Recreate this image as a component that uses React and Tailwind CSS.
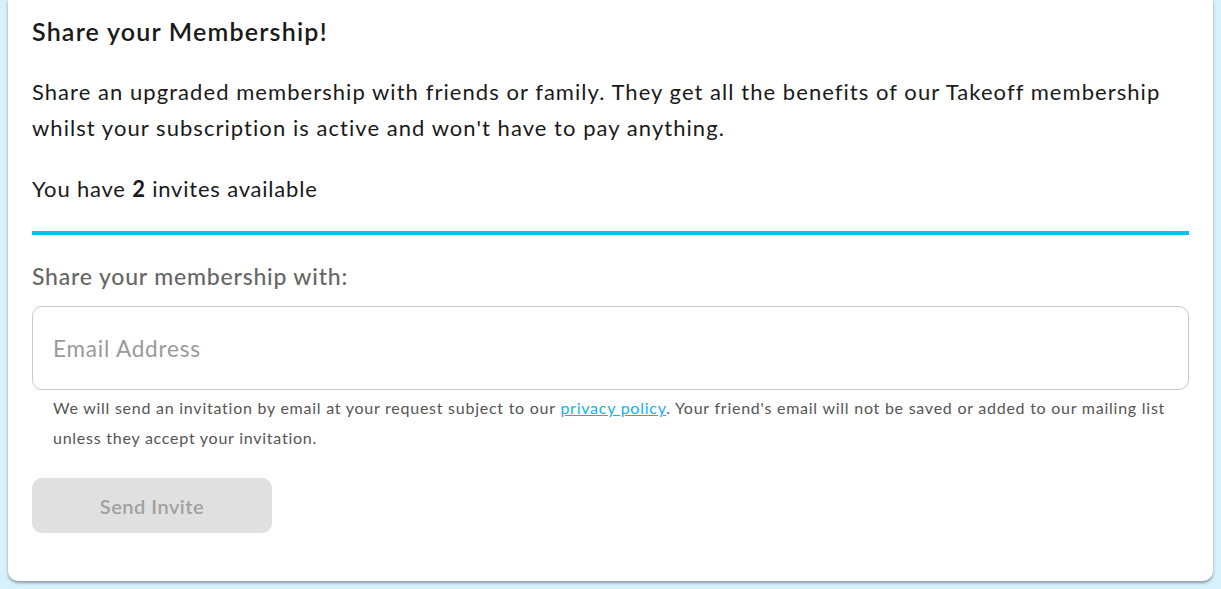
import React from 'react';

const App = () => {
  return (
    <div
      className="min-h-screen bg-[#d6f1fc] px-2 pb-2"
      style={{ fontFamily: 'Lato, "Noto Sans", sans-serif' }}
    >
      <div className="bg-white rounded-b-[10px] shadow-[0_2px_3px_rgba(0,0,0,0.35)] px-6 pt-[14px] pb-12">
        {/* Heading */}
        <h2 className="text-[25px] leading-[34px] font-semibold tracking-[1.2px] text-[#1a1a1a]">
          Share your Membership!
        </h2>

        <p className="mt-[26px] text-[22px] leading-[36px] tracking-[1.05px] text-[#1a1a1a]">
          Share an upgraded membership with friends or family. They get all the benefits of our Takeoff membership
          whilst your subscription is active and won't have to pay anything.
        </p>

        <p className="mt-[25px] text-[22px] leading-[36px] tracking-[0.8px] text-[#1a1a1a]">
          You have <strong className="font-bold">2</strong> invites available
        </p>

        <div className="mt-[24px] h-[4px] bg-[#0cbdf6]" />

        {/* Form */}
        <label className="block mt-[24px] text-[23px] leading-[34px] font-medium tracking-[0.8px] text-[#666]">
          Share your membership with:
        </label>

        <input
          type="email"
          placeholder="Email Address"
          className="mt-[13px] w-full h-[84px] rounded-[10px] border border-[#c8c8c8] px-5 text-[22.5px] tracking-[0.8px] text-[#333] placeholder:text-[#9a9a9a] outline-none"
        />

        <p className="mt-[3px] px-[21px] text-[16px] leading-[30px] tracking-[0.75px] text-[#555]">
          We will send an invitation by email at your request subject to our{' '}
          <a href="#" className="text-[#1eaef0] underline">privacy policy</a>. Your friend's email will not be saved or added to our mailing list
          unless they accept your invitation.
        </p>

        <button
          disabled
          className="mt-[25px] w-[240px] h-[55px] rounded-[10px] bg-[#e0e0e0] text-[20px] font-semibold tracking-[0.5px] text-[#a0a0a0]"
        >
          Send Invite
        </button>
      </div>
    </div>
  );
};

export default App;
